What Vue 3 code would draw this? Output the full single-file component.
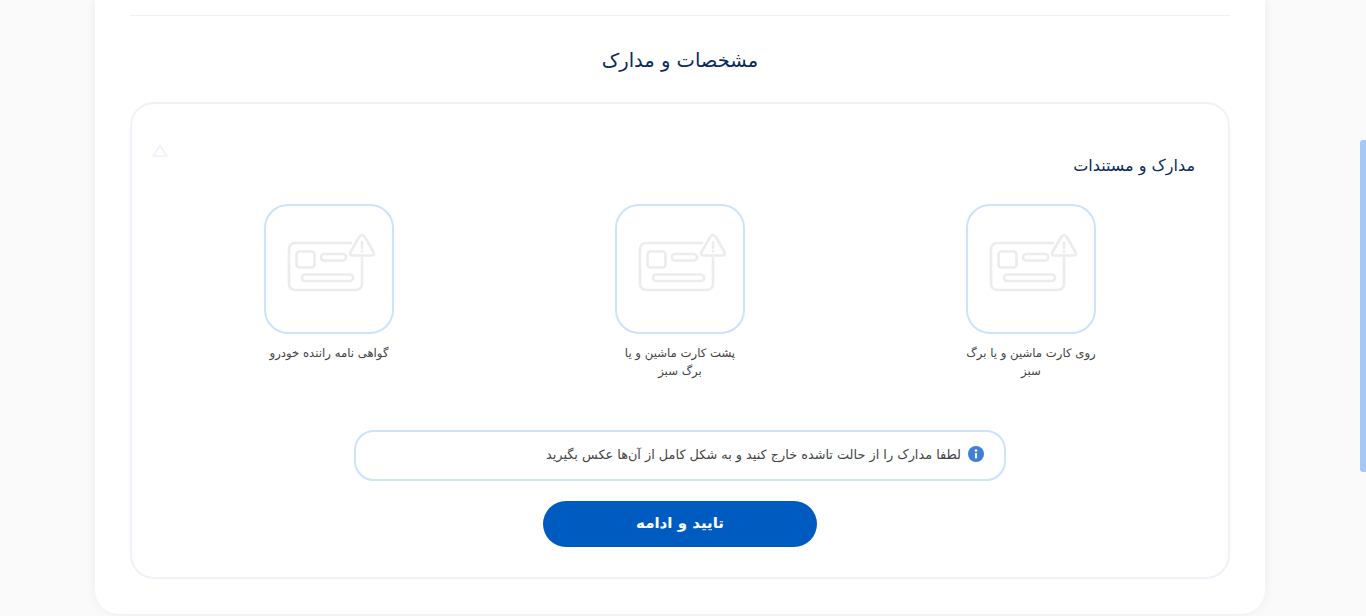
<template>
  <div class="page" dir="rtl">
    <div class="card">
      <div class="divider"></div>
      <h2 class="title">مشخصات و مدارک</h2>
      <div class="box">
        <div class="box-head">
          <h3 class="box-title">مدارک و مستندات</h3>
          <svg class="broken" width="16" height="13" viewBox="0 0 16 13" fill="none">
            <path d="M8 1.500 14.800 12H1.200Z" stroke="#eef2f9" stroke-width="1.600" stroke-linejoin="round" />
          </svg>
        </div>
        <div class="docs">
          <div v-for="doc in docs" :key="doc" class="doc">
            <div class="tile">
              <svg width="96" height="72" viewBox="0 0 96 72" fill="none" stroke="#ececec" stroke-width="2.600" stroke-linejoin="round">
                <path d="M71 10H14a6 6 0 0 0-6 6v35a6 6 0 0 0 6 6h61a6 6 0 0 0 6-6V24" />
                <rect x="15.500" y="18.500" width="18" height="16" rx="3" />
                <rect x="40" y="21" width="25" height="6.500" rx="3" />
                <rect x="21" y="41.500" width="51" height="6.500" rx="3" />
                <path d="M78.500 3.500Q81 .5 83.500 3.500L92.500 19Q94 22.500 90 22.500H72Q68 22.500 69.500 19Z" fill="#fff" />
                <path d="M81 9v6M81 18v.5" stroke-linecap="round" />
              </svg>
            </div>
            <p class="doc-label">{{ doc }}</p>
          </div>
        </div>
        <div class="notice">
          <svg width="16" height="16" viewBox="0 0 16 16">
            <circle cx="8" cy="8" r="8" fill="#3f7fd6" />
            <circle cx="8" cy="4.600" r="1.300" fill="#fff" />
            <rect x="6.900" y="7" width="2.200" height="5.400" rx="0.600" fill="#fff" />
          </svg>
          <span>لطفا مدارک را از حالت تاشده خارج کنید و به شکل کامل از آن‌ها عکس بگیرید</span>
        </div>
        <button class="submit" type="button">تایید و ادامه</button>
      </div>
    </div>
    <div class="scroll-thumb"></div>
  </div>
</template>

<script setup>
const docs = ['روی کارت ماشین و یا برگ سبز', 'پشت کارت ماشین و یا برگ سبز', 'گواهی نامه راننده خودرو']
</script>

<style>
html,
body {
  margin: 0;
  overflow: hidden;
}
</style>

<style scoped>
.page {
  position: relative;
  height: 616px;
  overflow: hidden;
  background: #fafafa;
  font-family: "DejaVu Sans", sans-serif;
  padding-right: 101px;
  padding-left: 95px;
  box-sizing: border-box;
}

.card {
  width: 1170px;
  height: 614px;
  box-sizing: border-box;
  padding: 15px 35px 0;
  background: #fff;
  border-radius: 0 0 24px 24px;
  box-shadow: 0 0 12px rgba(0, 0, 0, 0.06);
}

.divider {
  height: 1px;
  background: #f0f0f0;
}

.title {
  margin: 32px 0 28px;
  height: 26px;
  line-height: 26px;
  text-align: center;
  font-size: 19.5px;
  font-weight: 400;
  color: #0a2a5e;
}

.box {
  height: 477px;
  box-sizing: border-box;
  border: 2px solid #eef2f9;
  border-radius: 24px;
  padding-top: 47px;
  display: flex;
  flex-direction: column;
  align-items: center;
}

.box-head {
  position: relative;
  align-self: stretch;
  height: 30px;
  padding-right: 33px;
}

.box-title {
  margin: 0;
  line-height: 30px;
  font-size: 16px;
  font-weight: 400;
  color: #0a2a5e;
}

.broken {
  position: absolute;
  left: 20px;
  top: -7px;
}

.docs {
  width: 1053px;
  margin-top: 23px;
  display: grid;
  grid-template-columns: repeat(3, 351px);
  height: 226px;
}

.doc {
  display: flex;
  flex-direction: column;
  align-items: center;
}

.tile {
  width: 130px;
  height: 130px;
  box-sizing: border-box;
  border: 2px solid #cbe3fc;
  border-radius: 24px;
  display: flex;
  align-items: center;
  justify-content: center;
}

.doc-label {
  width: 130px;
  margin: 10px 0 0;
  text-align: center;
  font-size: 11.700px;
  line-height: 18px;
  color: #444;
}

.notice {
  width: 652px;
  height: 51px;
  box-sizing: border-box;
  border: 2px solid #cbe3fc;
  border-radius: 20px;
  padding: 0 20px 3px 0;
  display: flex;
  align-items: center;
  gap: 7px;
  font-size: 12.850px;
  color: #444;
}

.submit {
  width: 274px;
  height: 46px;
  margin-top: 20px;
  padding: 0 0 2px;
  border: 0;
  border-radius: 23px;
  background: #005bc1;
  color: #fff;
  font-family: inherit;
  font-size: 15px;
  font-weight: 700;
}

.scroll-thumb {
  position: absolute;
  right: 0;
  top: 140px;
  width: 6px;
  height: 332px;
  border-radius: 3px 0 0 3px;
  background: #a6c8f5;
}
</style>
